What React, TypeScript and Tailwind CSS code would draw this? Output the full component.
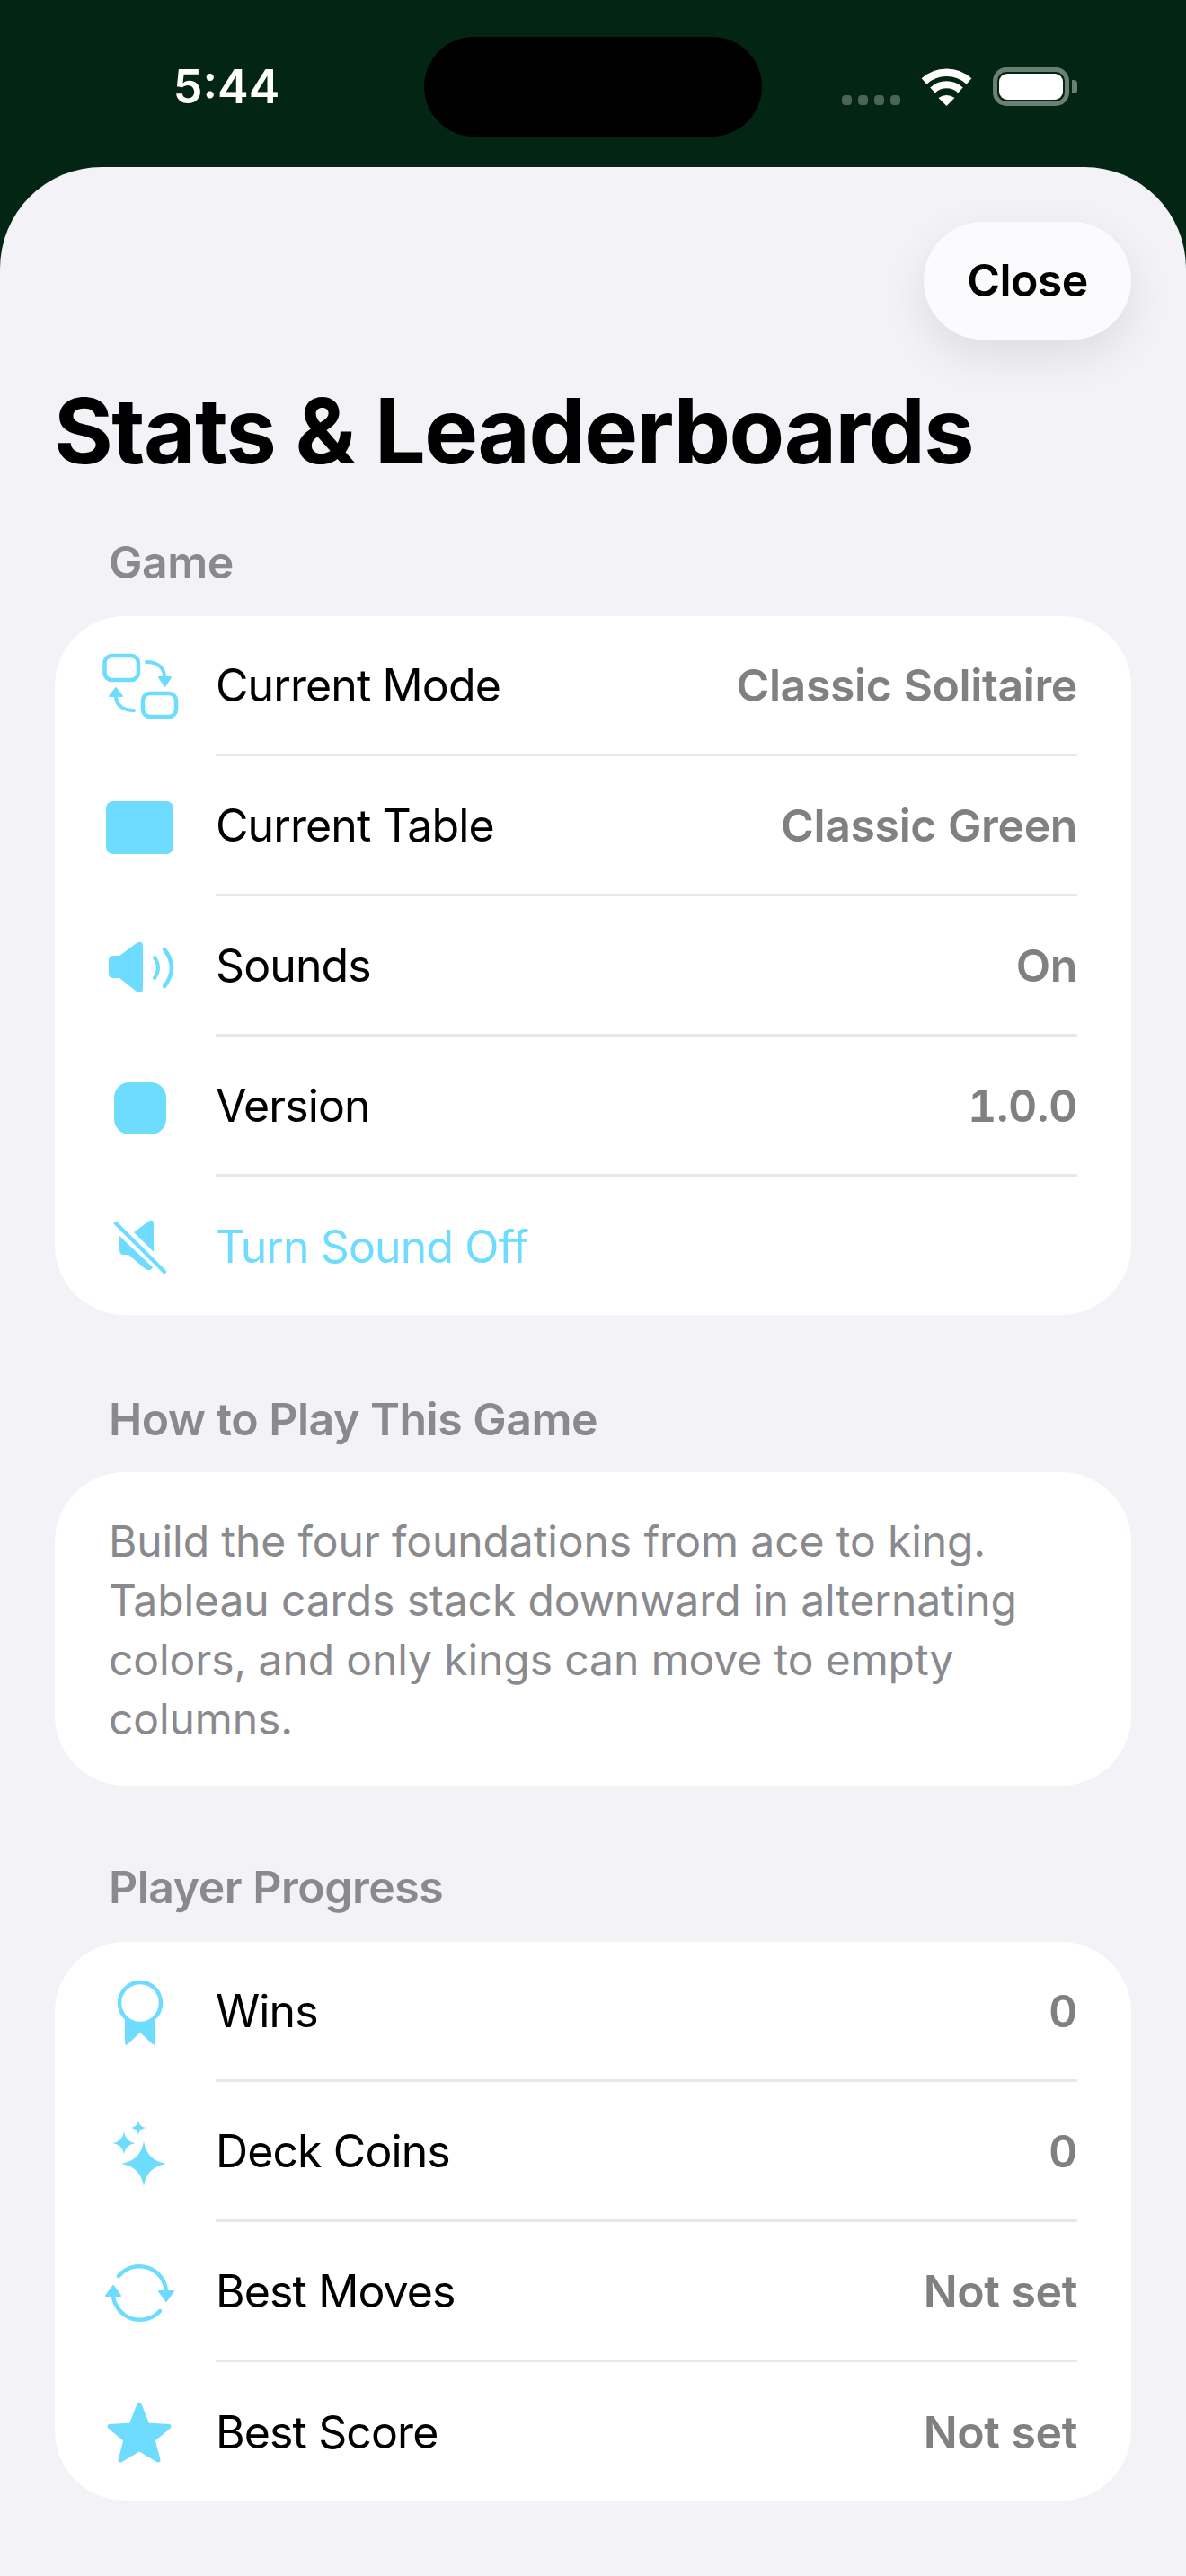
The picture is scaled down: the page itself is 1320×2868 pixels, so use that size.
import type { ReactNode } from "react";

const CYAN = "#6edcff";

const SwapIcon = () => (
  <svg viewBox="0 0 100 100" className="w-[100px] h-[100px]" fill="none">
    <rect x="10.5" y="16" width="37.5" height="27" rx="8" stroke={CYAN} strokeWidth="4.5" />
    <rect x="53" y="58" width="37" height="26" rx="8" stroke={CYAN} strokeWidth="4.5" />
    <path d="M57 23C69 23 77 29 77 40" stroke={CYAN} strokeWidth="4" strokeLinecap="round" />
    <path d="M71 40H84L77.5 50Z" fill={CYAN} stroke={CYAN} strokeWidth="2" strokeLinejoin="round" />
    <path d="M43 77C31 77 23 71 23 61" stroke={CYAN} strokeWidth="4" strokeLinecap="round" />
    <path d="M16 61H30L23 52Z" fill={CYAN} stroke={CYAN} strokeWidth="2" strokeLinejoin="round" />
  </svg>
);

const TableIcon = () => (
  <svg viewBox="0 0 100 100" className="w-[100px] h-[100px]">
    <rect x="12" y="22" width="75" height="59" rx="8" fill={CYAN} />
  </svg>
);

const SoundIcon = () => (
  <svg viewBox="0 0 100 100" className="w-[100px] h-[100px]" fill="none">
    <path
      d="M20 38H27L46 24Q53 20 53 28V74Q53 82 46 78L27 63H20Q15 63 15 58V43Q15 38 20 38Z"
      fill={CYAN}
    />
    <path d="M66 40Q74 51.5 66 63" stroke={CYAN} strokeWidth="4" strokeLinecap="round" />
    <path d="M77 31Q93 51.5 77 72" stroke={CYAN} strokeWidth="4.5" strokeLinecap="round" />
  </svg>
);

const VersionIcon = () => (
  <svg viewBox="0 0 100 100" className="w-[100px] h-[100px]">
    <rect x="21" y="23" width="58" height="58" rx="17" fill={CYAN} />
  </svg>
);

const MuteIcon = () => (
  <svg viewBox="0 0 100 100" className="w-[100px] h-[100px]" fill="none">
    <path d="M43 35L59 23Q65 19 65 26V57Z" fill={CYAN} />
    <path d="M27 39V55Q27 60 32 60H37L56 76Q62 79 64 74Z" fill={CYAN} />
    <path d="M23 25L77 79" stroke={CYAN} strokeWidth="4.5" strokeLinecap="round" />
  </svg>
);

const RibbonIcon = () => (
  <svg viewBox="0 0 100 100" className="w-[100px] h-[100px]" fill="none">
    <path d="M33 58H67V84Q67 88 64 86L50 73L36 86Q33 88 33 84Z" fill={CYAN} />
    <circle cx="50" cy="40" r="23" fill="#fff" stroke={CYAN} strokeWidth="4.5" />
  </svg>
);

const star = (x: number, y: number, r: number) => {
  const k = r * 0.14;
  return `M${x} ${y - r}Q${x + k} ${y - k} ${x + r} ${y}Q${x + k} ${y + k} ${x} ${y + r}Q${x - k} ${y + k} ${x - r} ${y}Q${x - k} ${y - k} ${x} ${y - r}Z`;
};

const SparkleIcon = () => (
  <svg viewBox="0 0 100 100" className="w-[100px] h-[100px]">
    <path d={star(54, 63, 25)} fill={CYAN} />
    <path d={star(32, 40, 12.5)} fill={CYAN} />
    <path d={star(48, 23, 8)} fill={CYAN} />
  </svg>
);

const RefreshIcon = () => (
  <svg viewBox="0 0 100 100" className="w-[100px] h-[100px]" fill="none">
    <path d="M26 32A30 30 0 0 1 79 49" stroke={CYAN} strokeWidth="4.5" strokeLinecap="round" />
    <path d="M20 54A30 30 0 0 0 72 71" stroke={CYAN} strokeWidth="4.5" strokeLinecap="round" />
    <path d="M71 49H87L79 60Z" fill={CYAN} stroke={CYAN} strokeWidth="2" strokeLinejoin="round" />
    <path d="M12 54H28L20 43Z" fill={CYAN} stroke={CYAN} strokeWidth="2" strokeLinejoin="round" />
  </svg>
);

const StarIcon = () => (
  <svg viewBox="0 0 100 100" className="w-[100px] h-[100px]">
    <path
      d="M49 20L58 43L82 44.5L64 59.5L70 82L49 69.5L28 82L34 59.5L16 44.5L40 43Z"
      fill={CYAN}
      stroke={CYAN}
      strokeWidth="5"
      strokeLinejoin="round"
    />
  </svg>
);

const WifiIcon = () => (
  <svg viewBox="0 0 57 42" className="w-[57px] h-[42px]" fill="none">
    <path d="M3.5 14.5A37 37 0 0 1 53.5 14.5" stroke="#fff" strokeWidth="8.5" />
    <path d="M13 24.5A22.5 22.5 0 0 1 44 24.5" stroke="#fff" strokeWidth="8" />
    <path d="M28.5 42L19.5 33Q28.5 27 37.5 33Z" fill="#fff" />
  </svg>
);

type RowProps = { icon: ReactNode; label: string; value?: string; accent?: boolean; last?: boolean };

const Row = ({ icon, label, value, accent, last }: RowProps) => (
  <div className={`flex items-center pl-[45px] ${last ? "h-[154px]" : "h-[156px]"}`}>
    <div className="mr-[34px] shrink-0">{icon}</div>
    <div
      className={`mr-[60px] flex flex-1 h-full items-center justify-between pt-[2px] ${
        last ? "" : "border-b-[3px] border-[#e8e8ea]"
      }`}
    >
      <span className={`text-[50px] tracking-[-0.9px] ${accent ? "text-[#6edcff]" : "text-black"}`}>{label}</span>
      {value && <span className="text-[50px] font-[560] tracking-[-0.4px] tabular-nums text-[#808080]">{value}</span>}
    </div>
  </div>
);

const Header = ({ children }: { children: ReactNode }) => (
  <h2 className="h-[60px] pl-[60px] text-[50px] leading-[60px] font-semibold tracking-[-0.5px] text-[#8a8a8e]">
    {children}
  </h2>
);

export default function App() {
  return (
    <div className="w-[1320px] h-[2868px] overflow-hidden bg-[#032513] font-['Inter',sans-serif]">
      {/* status bar */}
      <div className="flex h-[186px] items-start">
        <div className="flex w-[472px] justify-center pt-[64px] pl-[32px]">
          <span className="text-[52px] leading-[66px] font-semibold text-white">5:44</span>
        </div>
        <div className="mt-[41px] h-[111px] w-[376px] rounded-full bg-black" />
        <div className="flex items-end pl-[89px] pt-[75px]">
          <div className="mb-[1px] flex gap-[7px]">
            <div className="h-[11px] w-[11px] rounded-[4px] bg-[#4a6557]" />
            <div className="h-[11px] w-[11px] rounded-[4px] bg-[#4a6557]" />
            <div className="h-[11px] w-[11px] rounded-[4px] bg-[#4a6557]" />
            <div className="h-[11px] w-[11px] rounded-[4px] bg-[#4a6557]" />
          </div>
          <div className="ml-[23px]">
            <WifiIcon />
          </div>
          <div className="ml-[23px] flex h-[43px] items-center gap-[3px]">
            <div className="h-[43px] w-[85px] rounded-[15px] border-[5px] border-[#6a8075] p-[2px]">
              <div className="h-full w-full rounded-[9px] bg-white" />
            </div>
            <div className="h-[15px] w-[6px] rounded-r-[4px] bg-[#6a8075]" />
          </div>
        </div>
      </div>

      {/* sheet */}
      <div className="h-[2682px] rounded-t-[113px] bg-[#f2f2f7] px-[61px] pt-[61px]">
        <div className="flex justify-end">
          <button className="h-[131px] w-[231px] rounded-full bg-[#fbfbfe] text-[50px] font-semibold tracking-[-0.6px] text-black shadow-[0_18px_50px_rgba(0,0,0,0.09)]">
            Close
          </button>
        </div>
        <h1 className="mt-[37px] -ml-[1px] h-[130px] text-[100.5px] leading-[130px] font-bold tracking-[-1.5px] text-black">
          Stats &amp; Leaderboards
        </h1>

        <div className="mt-[51px]">
          <Header>Game</Header>
          <div className="mt-[30px] rounded-[78px] bg-white">
            <Row icon={<SwapIcon />} label="Current Mode" value="Classic Solitaire" />
            <Row icon={<TableIcon />} label="Current Table" value="Classic Green" />
            <Row icon={<SoundIcon />} label="Sounds" value="On" />
            <Row icon={<VersionIcon />} label="Version" value="1.0.0" />
            <Row icon={<MuteIcon />} label="Turn Sound Off" accent last />
          </div>
        </div>

        <div className="mt-[86px]">
          <Header>How to Play This Game</Header>
          <div className="mt-[29px] rounded-[78px] bg-white pt-[44px] pr-[60px] pb-[41px] pl-[60px]">
            <p className="text-[48px] leading-[66px] tracking-[-0.1px] text-[#8a8a8e]">
              Build the four foundations from ace to king. Tableau cards stack downward in alternating colors, and only
              kings can move to empty columns.
            </p>
          </div>
        </div>

        <div className="mt-[83px]">
          <Header>Player Progress</Header>
          <div className="mt-[31px] rounded-[78px] bg-white">
            <Row icon={<RibbonIcon />} label="Wins" value="0" />
            <Row icon={<SparkleIcon />} label="Deck Coins" value="0" />
            <Row icon={<RefreshIcon />} label="Best Moves" value="Not set" />
            <Row icon={<StarIcon />} label="Best Score" value="Not set" last />
          </div>
        </div>
      </div>
    </div>
  );
}
